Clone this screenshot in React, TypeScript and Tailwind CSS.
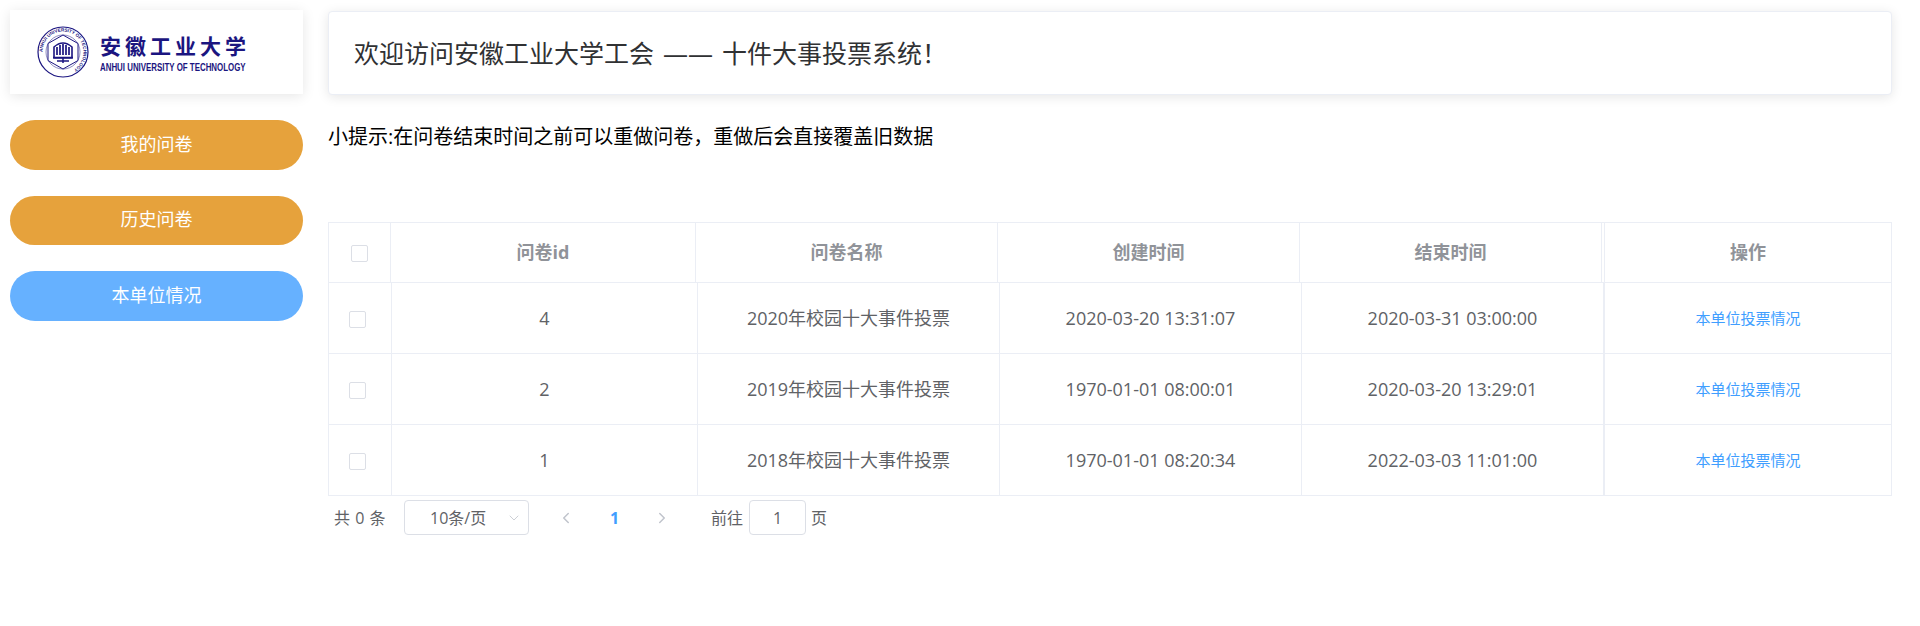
import React from "react";
import { ChevronDown, ChevronLeft, ChevronRight } from "lucide-react";

const font = { fontFamily: '"Open Sans", "Noto Sans CJK SC", sans-serif' };
const rows = [
  ["4", "2020年校园十大事件投票", "2020-03-20 13:31:07", "2020-03-31 03:00:00"],
  ["2", "2019年校园十大事件投票", "1970-01-01 08:00:01", "2020-03-20 13:29:01"],
  ["1", "2018年校园十大事件投票", "1970-01-01 08:20:34", "2022-03-03 11:01:00"],
];

function Seal() {
  return (
    <svg width="52" height="52" viewBox="0 0 52 52" className="shrink-0">
      <defs>
        <path id="ring" d="M26 26 m-20.5 0 a20.5 20.5 0 1 1 41 0 a20.5 20.5 0 1 1 -41 0" />
      </defs>
      <circle cx="26" cy="26" r="25" fill="none" stroke="#1b1580" strokeWidth="1.2" />
      <circle cx="26" cy="26" r="17" fill="none" stroke="#1b1580" strokeWidth="0.5" />
      <text fontSize="4.6" fontWeight="700" fill="#1b1580" fontFamily="Liberation Sans">
        <textPath href="#ring">ANHUI UNIVERSITY OF TECHNOLOGY</textPath>
      </text>
      <polygon points="26,9 41,17.5 41,34.5 26,43 11,34.5 11,17.5" fill="#fff" stroke="#1b1580" strokeWidth="1" />
      <path d="M17 21 Q26 13 35 21 V32 H17 Z" fill="none" stroke="#1b1580" strokeWidth="1.6" />
      <path d="M20 21v8M23 19v10M26 18v11M29 19v10M32 21v8" stroke="#1b1580" strokeWidth="1.7" />
      <path d="M16 31.5h20M26 31v6M20 35h12" stroke="#1b1580" strokeWidth="1.5" />
    </svg>
  );
}

function Check({ className }: { className: string }) {
  return <div className={`w-[17px] h-[17px] rounded-[2px] border border-[#dcdfe6] bg-white ${className}`} />;
}

export default function App() {
  return (
    <div style={font} className="w-[1920px] h-[626px] bg-white flex overflow-hidden">
      <aside className="w-[293px] ml-[10px] mt-[10px] shrink-0 flex flex-col">
        <div className="h-[84px] bg-white shadow-[0_2px_12px_rgba(0,0,0,0.1)] flex items-center pl-[27px] gap-[11px]">
          <Seal />
          <div className="flex flex-col items-start text-[#1b1580] leading-none pt-[2px]">
            <span className="text-[21px] font-bold tracking-[4px] leading-[26px] whitespace-nowrap">安徽工业大学</span>
            <span className="text-[10px] font-bold scale-x-[0.79] origin-left leading-[12px] mt-[3px] whitespace-nowrap" style={{ fontFamily: '"Liberation Sans", sans-serif' }}>
              ANHUI UNIVERSITY OF TECHNOLOGY
            </span>
          </div>
        </div>
        <div className="mt-[26px] flex flex-col gap-[26px] text-white text-[18px]">
          <div className="h-[50px] rounded-full bg-[#e6a23c] flex items-center justify-center pb-[2px]">我的问卷</div>
          <div className="h-[49px] rounded-full bg-[#e6a23c] flex items-center justify-center pb-[2px]">历史问卷</div>
          <div className="h-[50px] rounded-full bg-[#66b1ff] flex items-center justify-center pb-[2px]">本单位情况</div>
        </div>
      </aside>

      <main className="w-[1564px] ml-[25px] shrink-0">
        <div className="mt-[11px] h-[84px] rounded-[4px] border border-[#ebeef5] bg-white shadow-[0_2px_12px_rgba(0,0,0,0.1)] flex items-center pl-[25px] pt-[2px] text-[25px] text-[#303133] whitespace-nowrap">
          <span>欢迎访问安徽工业大学工会</span>
          <span className="mx-[9px]">——</span>
          <span>十件大事投票系统！</span>
        </div>
        <div className="mt-[24px] text-[20px] leading-[36px] text-black whitespace-nowrap">小提示:在问卷结束时间之前可以重做问卷，重做后会直接覆盖旧数据</div>

        <div className="mt-[67px] border border-[#ebeef5]">
          <div className="grid grid-cols-[62px_305px_302px_302px_302px_2px_1fr] h-[60px] border-b border-[#ebeef5] text-[18px] font-bold text-[#909399]">
            <div className="border-r border-[#ebeef5] flex items-center pl-[22px]"><Check className="mt-[1px]" /></div>
            <div className="border-r border-[#ebeef5] flex items-center justify-center">问卷id</div>
            <div className="border-r border-[#ebeef5] flex items-center justify-center">问卷名称</div>
            <div className="border-r border-[#ebeef5] flex items-center justify-center">创建时间</div>
            <div className="border-r border-[#ebeef5] flex items-center justify-center">结束时间</div>
            <div />
            <div className="border-l border-[#ebeef5] flex items-center justify-center">操作</div>
          </div>
          {rows.map((r, i) => (
            <div key={r[0]} className={`grid grid-cols-[63px_306px_302px_302px_301px_1fr] text-[18px] text-[#606266] ${i < 2 ? "h-[71px] border-b border-[#ebeef5]" : "h-[70px]"}`}>
              <div className="border-r border-[#ebeef5] flex items-center pl-[20px]"><Check className="mt-[2px]" /></div>
              <div className="border-r border-[#ebeef5] flex items-center justify-center">{r[0]}</div>
              <div className="border-r border-[#ebeef5] flex items-center justify-center whitespace-nowrap">{r[1]}</div>
              <div className="border-r border-[#ebeef5] flex items-center justify-center">{r[2]}</div>
              <div className="flex items-center justify-center">{r[3]}</div>
              <div className="border-l-[2px] border-[#ebeef5] flex items-center justify-center text-[15px] text-[#409eff]">本单位投票情况</div>
            </div>
          ))}
        </div>

        <div className="mt-[4px] flex items-center h-[35px] text-[16px] text-[#606266] pl-[6px]">
          <span className="w-[70px] whitespace-nowrap [word-spacing:1px]">共 0 条</span>
          <div className="w-[125px] h-[35px] rounded-[4px] border border-[#dcdfe6] flex items-center pl-[25px] relative">
            <span>10条/页</span>
            <ChevronDown size={16} strokeWidth={1.2} className="absolute right-[6px] text-[#c0c4cc]" />
          </div>
          <ChevronLeft size={18} strokeWidth={2} className="ml-[28px] text-[#c0c4cc]" />
          <span className="ml-[35px] w-[10px] font-bold text-[#409eff]">1</span>
          <ChevronRight size={18} strokeWidth={2} className="ml-[33px] text-[#c0c4cc]" />
          <span className="ml-[40px]">前往</span>
          <div className="ml-[6px] w-[57px] h-[35px] rounded-[4px] border border-[#dcdfe6] flex items-center justify-center">1</div>
          <span className="ml-[5px]">页</span>
        </div>
      </main>
    </div>
  );
}
